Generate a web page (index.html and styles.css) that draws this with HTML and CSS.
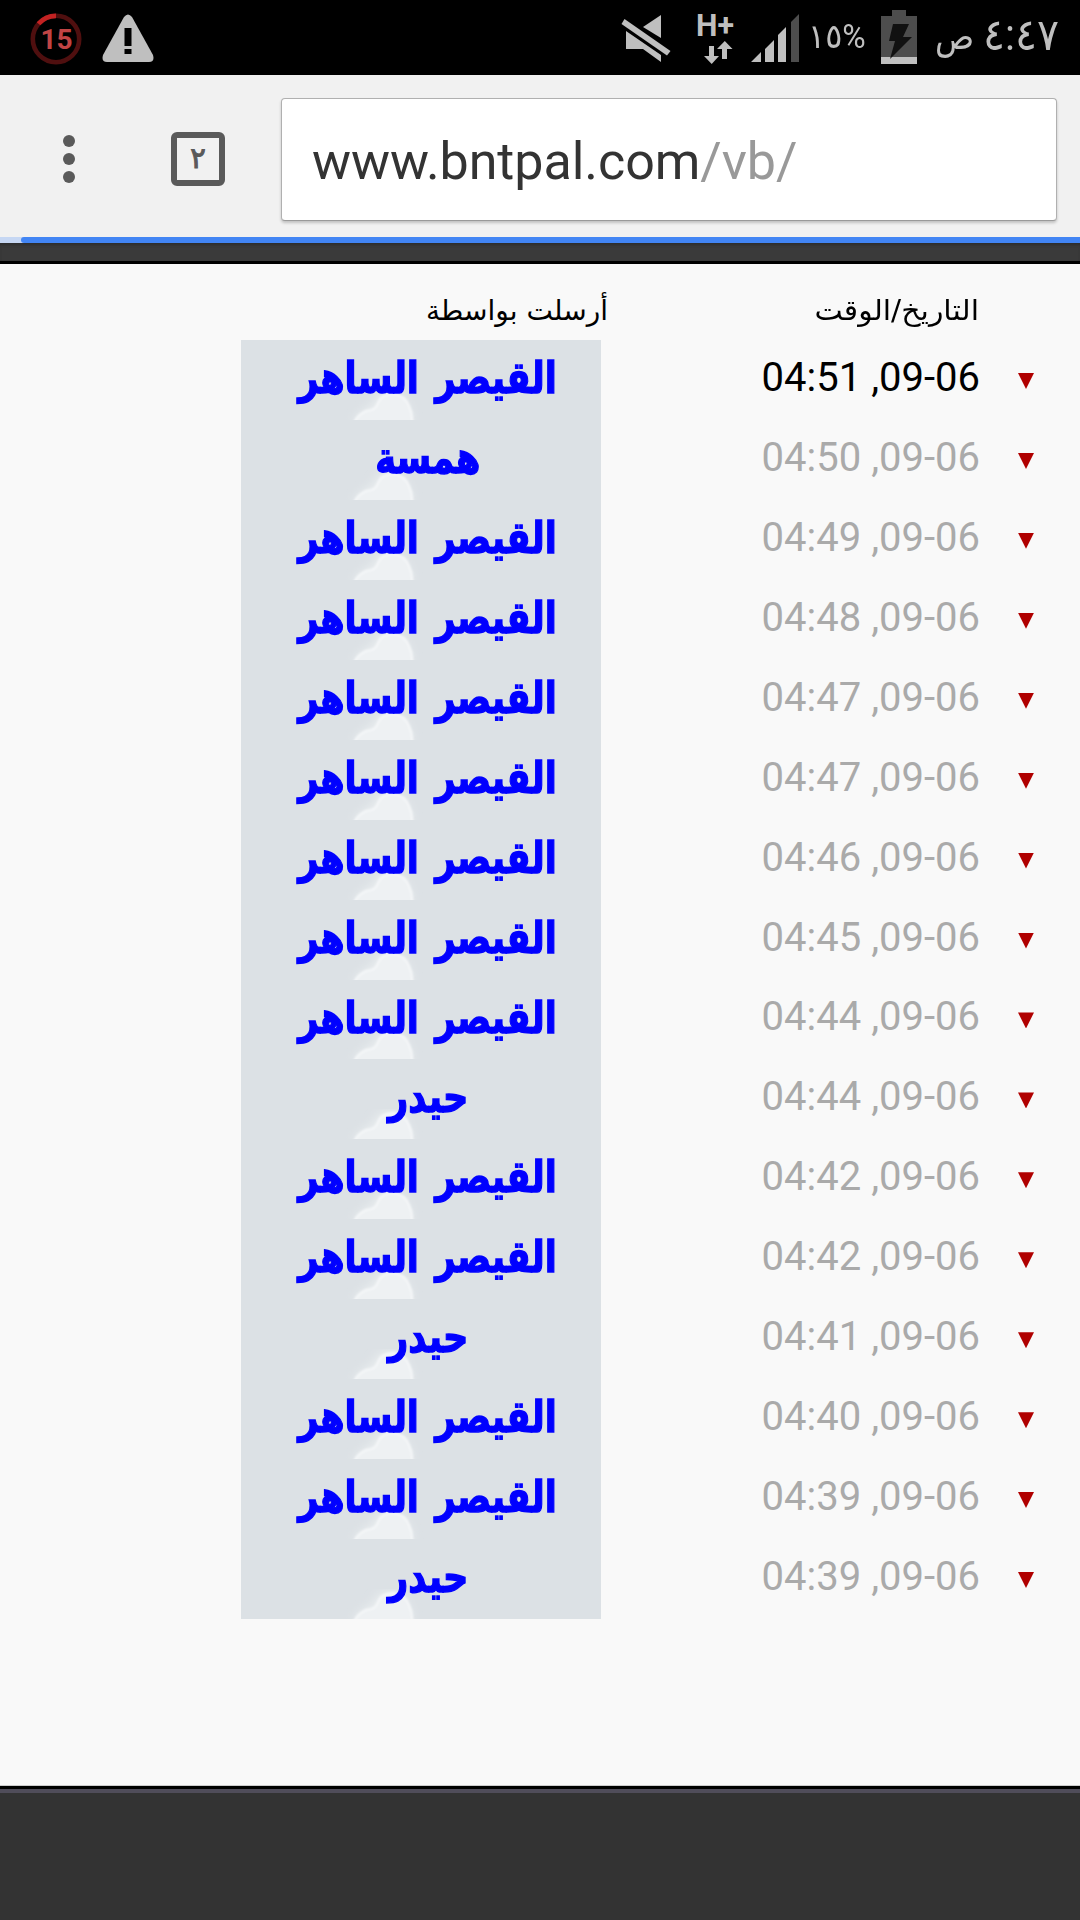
FILE: index.html
```html
<!DOCTYPE html>
<html lang="ar" dir="rtl">

<head>
    <meta charset="UTF-8">
    <meta name="viewport" content="width=device-width, initial-scale=1.0">
    <title>www.bntpal.com/vb/</title>
    <link rel="stylesheet" href="styles.css">
</head>

<body>
    <header class="statusbar">
        <div class="notifications">
            <svg class="icon-usage" width="54" height="54" viewBox="0 0 54 54">
                <circle cx="27" cy="27" r="23.2" fill="none" stroke="#4f0f0f" stroke-width="4.6" />
                <path d="M9.5 11.8A23.2 23.2 0 0 1 27 3.8" fill="none" stroke="#c22222" stroke-width="4.8" />
                <text x="27.5" y="37" text-anchor="middle">15</text>
            </svg>
            <svg class="icon-warning" width="54" height="49" viewBox="0 0 54 49">
                <path d="M23 3Q27-2 31 3L52 41Q54 48 48 48H6Q0 48 2 41Z" fill="#bfbfbf" />
                <path d="M23.500 14h7v18h-7zM23.500 35h7v5h-7z" fill="#000" />
            </svg>
        </div>
        <div class="indicators">
            <svg width="180" height="75" viewBox="620 0 180 75">
                <g fill="#bfbfbf">
                    <path d="M661 15V38L643 27Z" />
                    <path d="M626 31L661 55V62L643 49H626Z" />
                    <path d="M624.500 19L670.500 51L667 55.500L621.500 24Z" stroke="#000" stroke-width="4" paint-order="stroke" />
                    <path d="M709 46h5v10h5l-7.300 8-7.700-8h5z" />
                    <path d="M722 59h5V49h5.500l-7.700-8-7.800 8h5z" />
                    <path d="M751 62l10-10v10zM765 62V49l9-9v22zM778 62V35l8-8v35z" />
                </g>
                <path d="M791 62V22l8-8v48z" fill="#4d4d4d" />
                <text class="network" x="696" y="36" textLength="38" lengthAdjust="spacingAndGlyphs">H+</text>
            </svg>
            <span class="percent" dir="ltr">١٥%</span>
            <svg class="battery" width="36" height="54" viewBox="0 0 36 54">
                <path d="M11 0h14v6h11v48H0V6h11z" fill="#4d4d4d" />
                <path d="M0 47h36v7H0z" fill="#bfbfbf" />
                <path d="M12 14h16l-6 13h9L9 49l5-18H8z" fill="#111" />
            </svg>
            <div class="clock"><span class="digits">٤:٤٧</span><span class="period">ص</span></div>
        </div>
    </header>

    <nav class="toolbar">
        <svg class="menu" width="12" height="48" viewBox="0 0 12 48" fill="#5a5a5a">
            <circle cx="6" cy="6" r="6" />
            <circle cx="6" cy="24" r="6" />
            <circle cx="6" cy="42" r="6" />
        </svg>
        <div class="tabs"><span>٢</span></div>
        <div class="url">www.bntpal.com<span class="path">/vb/</span></div>
    </nav>
    <div class="progress"><div class="progress-bar"></div></div>
    <div class="page-top"></div>

    <svg class="defs" width="0" height="0">
        <defs>
            <filter id="soft" x="-30%" y="-30%" width="160%" height="160%">
                <feGaussianBlur stdDeviation="4" />
            </filter>
            <filter id="edge">
                <feGaussianBlur stdDeviation="0.8" />
            </filter>
            <symbol id="cloud" viewBox="0 0 90 30">
                <path d="M14 34Q20 20 33 16Q38 2 52 2Q72 4 76 34Z" fill="#e8ecee" filter="url(#soft)" />
                <path d="M16 33Q19 25 28 21Q38 20 39.500 14Q43 4 55 4Q67 5 71 16Q75 24 74 33Z" fill="#eef1f3" stroke="#f6f8f9" stroke-width="2" filter="url(#edge)" />
            </symbol>
        </defs>
    </svg>

    <main class="messages">
        <div class="head">
            <span class="head-time">التاريخ/الوقت</span>
            <span class="head-by">أرسلت بواسطة</span>
        </div>
        <div id="list"></div>
    </main>
    <footer class="page-bottom"></footer>

    <script src="script.js"></script>
</body>

</html>
```
FILE: styles.css
```css
* {
    box-sizing: border-box;
}

body {
    margin: 0;
    height: 1920px;
    background-color: #333;
    font-family: Roboto, "DejaVu Sans", sans-serif;
    display: flex;
    flex-direction: column;
    overflow: hidden;
}

svg {
    display: block;
    flex: none;
}

.defs {
    height: 0;
}

.statusbar {
    height: 75px;
    flex: none;
    background-color: #000;
    color: #bfbfbf;
    direction: ltr;
    display: flex;
    justify-content: space-between;
}

.notifications {
    display: flex;
    gap: 18px;
    padding: 12px 0 0 29px;
}

.icon-warning {
    margin-top: 2px;
}

.icon-usage text {
    font: bold 28px Roboto, sans-serif;
    fill: #c04444;
}

.indicators {
    display: flex;
    align-items: center;
    padding-right: 21px;
}

.network {
    font: bold 31px Roboto, sans-serif;
    fill: #bfbfbf;
}

.percent {
    width: 54px;
    margin-left: 8px;
    margin-top: -3px;
    font-size: 34px;
    white-space: nowrap;
    transform: scaleX(0.94);
    transform-origin: left;
}

.battery {
    margin-left: 19px;
    margin-top: -1px;
}

.clock {
    width: 124px;
    margin-left: 18px;
    direction: rtl;
    display: flex;
    justify-content: space-between;
    align-items: baseline;
    font-size: 41px;
    line-height: 60px;
    white-space: nowrap;
    margin-top: -4px;
}

.digits {
    transform: scaleY(1.08);
}

.period {
    font-size: 36px;
    transform: scaleX(0.9);
    transform-origin: left;
}

.toolbar {
    height: 162px;
    flex: none;
    background-color: #f1f1f1;
    direction: ltr;
    display: flex;
    align-items: center;
    padding: 6px 23px 0 63px;
}

.tabs {
    width: 54px;
    height: 54px;
    margin: 0 56px 0 96px;
    border: 6px solid #5a5a5a;
    border-radius: 6px;
    color: #5a5a5a;
    font: 29px/40px "DejaVu Sans", sans-serif;
    text-align: center;
    -webkit-text-stroke: 1px #5a5a5a;
}

.url {
    width: 777px;
    height: 123px;
    padding-left: 30px;
    border: 1px solid #b0b0b0;
    border-bottom-color: #999;
    border-radius: 4px;
    background-color: #fff;
    box-shadow: 0 2px 3px rgba(0, 0, 0, 0.2);
    color: #333;
    font-size: 52px;
    line-height: 126px;
    letter-spacing: -0.05px;
}

.path {
    color: #999;
}

.progress {
    height: 6px;
    flex: none;
    background-color: #c6d7f3;
    direction: ltr;
    padding-left: 21px;
}

.progress-bar {
    height: 6px;
    background-color: #4285f4;
    border-radius: 3px 0 0 3px;
}

.page-top {
    height: 21px;
    flex: none;
    background-color: #3a3a3a;
    border-bottom: 3px solid #000;
    box-shadow: inset 0 3px 3px -1px #2d2d2d;
}

.messages {
    height: 1522px;
    flex: none;
    background-color: #f9f9f9;
    border-bottom: 1px solid #ccc;
}

.head {
    height: 76px;
    display: flex;
    padding-right: 101px;
    font: 28px/93px "DejaVu Sans", sans-serif;
    white-space: nowrap;
}

.head-time {
    width: 371px;
    transform: scaleX(1.07);
    transform-origin: right;
}

.row {
    height: 79.94px;
    display: flex;
    align-items: center;
    padding-right: 46px;
}

.arrow {
    width: 16px;
    height: 16px;
    margin-top: 2px;
    background-color: #b00000;
    clip-path: polygon(0 0, 100% 0, 50% 100%);
}

.time {
    width: 417px;
    padding-right: 38px;
    color: #aaa;
    font-size: 40px;
    line-height: 80px;
    margin-top: -4px;
}

.row:first-child .time {
    color: #000;
}

.name {
    position: relative;
    width: 360px;
    height: 100%;
    padding-left: 14px;
    background-color: #dce1e5;
    color: #0000ff;
    font: bold 44px/76px "DejaVu Sans", sans-serif;
    text-align: center;
    white-space: nowrap;
    word-spacing: 5px;
    -webkit-text-stroke: 1.4px #0000ff;
}

.name svg {
    position: absolute;
    left: 97px;
    bottom: 0;
}

.name span {
    position: relative;
    display: inline-block;
    transform: scaleX(0.8);
}

.page-bottom {
    height: 134px;
    flex: none;
    background-color: #333;
    border-top: 3px solid #000;
    box-shadow: inset 0 4px #504d5a;
}
```
FILE: script.js
```js
const messages = [
    ['04:51', 'القيصر الساهر'],
    ['04:50', 'همسة'],
    ['04:49', 'القيصر الساهر'],
    ['04:48', 'القيصر الساهر'],
    ['04:47', 'القيصر الساهر'],
    ['04:47', 'القيصر الساهر'],
    ['04:46', 'القيصر الساهر'],
    ['04:45', 'القيصر الساهر'],
    ['04:44', 'القيصر الساهر'],
    ['04:44', 'حيدر'],
    ['04:42', 'القيصر الساهر'],
    ['04:42', 'القيصر الساهر'],
    ['04:41', 'حيدر'],
    ['04:40', 'القيصر الساهر'],
    ['04:39', 'القيصر الساهر'],
    ['04:39', 'حيدر']
];

document.getElementById('list').innerHTML = messages.map(([time, name]) => `
    <div class="row">
        <div class="arrow"></div>
        <div class="time">09-06, ${time}</div>
        <div class="name">
            <svg width="90" height="30"><use href="#cloud" /></svg>
            <span>${name}</span>
        </div>
    </div>`).join('');
```
